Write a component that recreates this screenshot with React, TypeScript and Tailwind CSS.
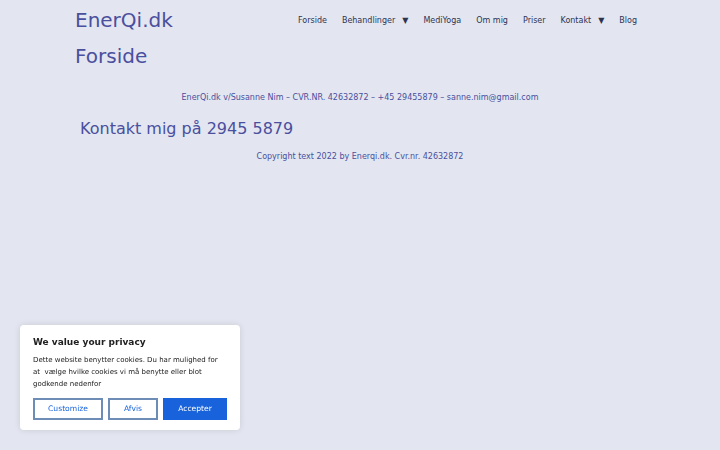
const NAV = [
  { label: 'Forside' },
  { label: 'Behandlinger', sub: true },
  { label: 'MediYoga' },
  { label: 'Om mig' },
  { label: 'Priser' },
  { label: 'Kontakt', sub: true },
  { label: 'Blog' },
];

function CookieBanner() {
  return (
    <div className="fixed left-[20px] bottom-[20px] w-[220px] rounded bg-white px-[13px] pt-[11px] pb-[10px] shadow-[0_0_6px_rgba(0,0,0,0.12)]">
      <p className="text-[9px] font-bold leading-[12px] text-[#212121]">We value your privacy</p>
      <p className="mt-[6px] text-[7px] leading-[12px] text-[#212121]">
        Dette website benytter cookies. Du har mulighed for at&nbsp; vælge hvilke cookies vi må benytte eller blot godkende nedenfor
      </p>
      <div className="mt-[8px] flex gap-[5px] text-[7.6px]">
        <button className="h-[22px] w-[70px] border-2 border-[#6e8db6] text-[#1863dc]">Customize</button>
        <button className="h-[22px] w-[50px] border-2 border-[#6e8db6] text-[#1863dc]">Afvis</button>
        <button className="h-[22px] w-[64px] border-2 border-[#1863dc] bg-[#1863dc] text-white">Accepter</button>
      </div>
    </div>
  );
}

export default function App() {
  return (
    <div className="min-h-[450px] bg-[#e3e6f0] font-['DejaVu_Sans',sans-serif] text-[#4a4f9e]">
      <div className="mx-auto w-[570px]">
        {/* header */}
        <header className="flex items-center justify-between pt-[7px]">
          <div className="text-[20px] leading-[26px]">EnerQi.dk</div>
          <nav className="mr-[8px] mt-[2px] flex items-center gap-[15px] text-[8px] text-[#2e3352]">
            {NAV.map((item) => (
              <span key={item.label} className="flex items-center">
                {item.label}
                {item.sub && <span className="ml-[7px] text-[8px]">▼</span>}
              </span>
            ))}
          </nav>
        </header>

        <h1 className="mt-[10px] text-[20px] leading-[26px]">Forside</h1>

        <p className="mt-[23px] text-center text-[8px] leading-[12px]">
          EnerQi.dk v/Susanne Nim – CVR.NR. 42632872 – +45 29455879 – sanne.nim@gmail.com
        </p>

        <h2 className="mt-[15px] pl-[5px] text-[16px] leading-[20px]">Kontakt mig på 2945 5879</h2>

        <p className="mt-[12px] text-center text-[8px] leading-[12px]">
          Copyright text 2022 by Enerqi.dk. Cvr.nr. 42632872
        </p>
      </div>
      <CookieBanner />
    </div>
  );
}
